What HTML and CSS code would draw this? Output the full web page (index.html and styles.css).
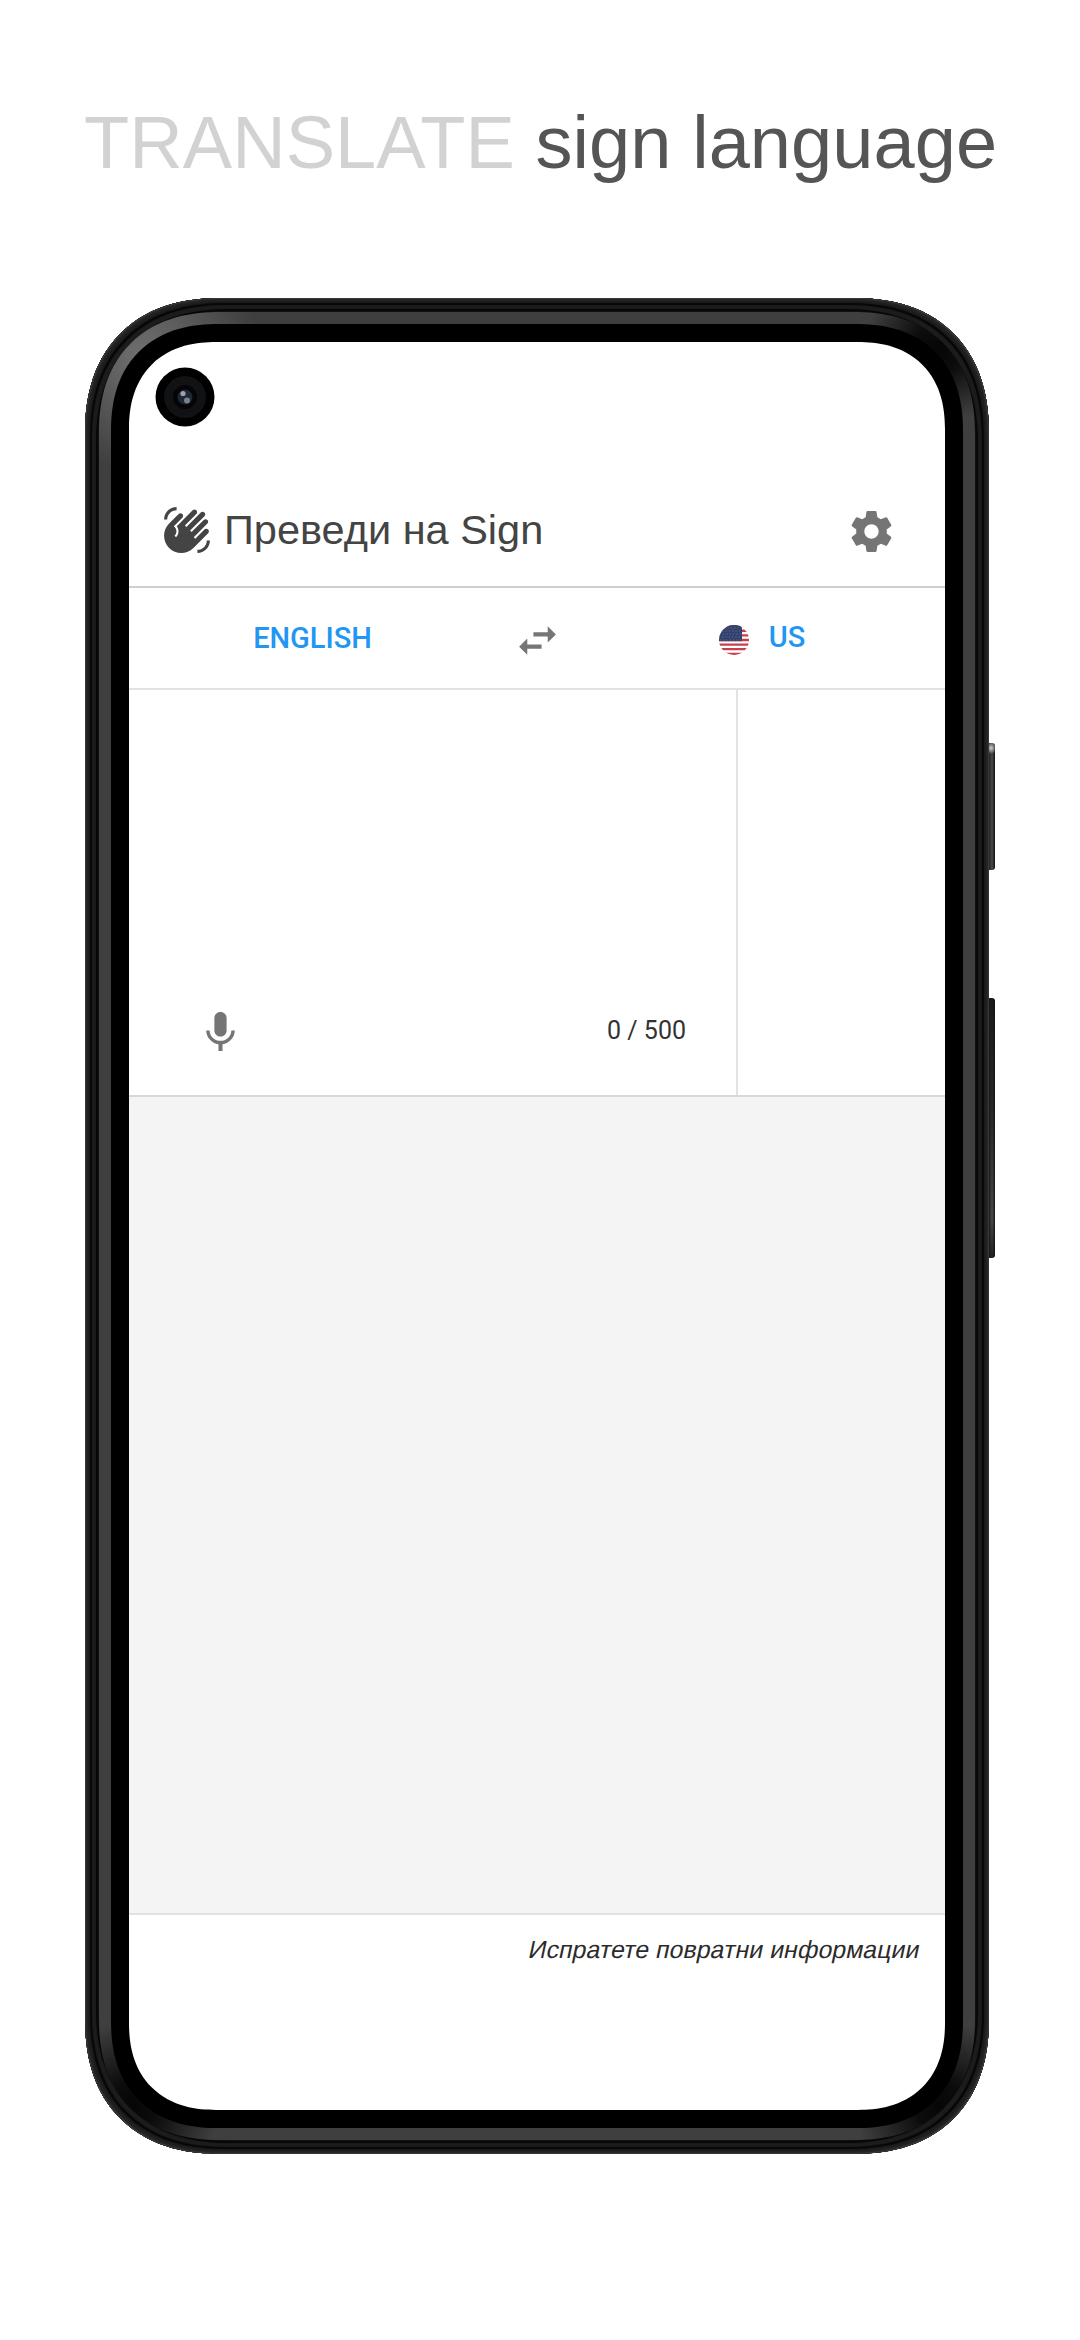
FILE: index.html
```html
<!DOCTYPE html>
<html lang="en">
<head>
<meta charset="utf-8">
<title>Преведи на Sign</title>
<link rel="stylesheet" href="styles.css">
</head>
<body>
<h1 class="headline"><span class="headline-light">TRANSLATE</span> sign language</h1>
<div class="phone">
  <span class="button power"></span>
  <span class="button volume"></span>
  <div class="rim">
    <div class="bezel">
      <div class="screen">
        <svg class="camera" viewBox="0 0 60 60">
          <circle cx="30" cy="30" r="29.5" fill="#000"/>
          <circle cx="30" cy="30" r="21" fill="#111214"/>
          <circle cx="30" cy="30" r="12" fill="#050507"/>
          <circle cx="30" cy="30" r="7.5" fill="#202733"/>
          <circle cx="28" cy="26.500" r="2.600" fill="#9da1ab"/>
          <circle cx="32" cy="33.500" r="3" fill="#71838e"/>
        </svg>
        <header class="app-bar">
          <svg class="hand" viewBox="0 0 24 24"><path d="M23 17c0 3.310-2.690 6-6 6v-1.500c2.480 0 4.500-2.020 4.500-4.500H23zM1 7c0-3.310 2.690-6 6-6v1.500C4.520 2.500 2.500 4.520 2.500 7H1zM8.010 4.320l-4.600 4.600c-3.220 3.220-3.220 8.450 0 11.670s8.450 3.220 11.670 0l7.070-7.070c.49-.49.49-1.280 0-1.770s-1.280-.49-1.770 0l-4.420 4.420-.71-.71 6.540-6.540c.49-.49.49-1.280 0-1.770s-1.280-.49-1.770 0l-5.830 5.830-.71-.71 6.890-6.890c.49-.49.49-1.280 0-1.770s-1.280-.49-1.770 0l-6.890 6.890-.71-.7 5.480-5.480c.49-.49.49-1.280 0-1.770s-1.280-.49-1.770 0l-7.620 7.620c1.220 1.570 1.110 3.840-.33 5.280l-.71-.71c1.170-1.170 1.170-3.070 0-4.240l-.35-.35 4.070-4.070c.49-.49.49-1.280 0-1.770-.49-.48-1.280-.48-1.760 0z"/></svg>
          <span class="app-title">Преведи на Sign</span>
          <svg class="gear" viewBox="0 0 24 24"><path d="M19.430 12.980c.04-.32.07-.64.07-.98s-.03-.66-.07-.98l2.110-1.650c.19-.15.24-.42.12-.64l-2-3.460c-.12-.22-.39-.3-.61-.22l-2.490 1c-.52-.4-1.080-.73-1.690-.98l-.38-2.650C14.460 2.180 14.250 2 14 2h-4c-.25 0-.46.18-.49.42l-.38 2.650c-.61.25-1.170.59-1.690.98l-2.490-1c-.23-.09-.49 0-.61.22l-2 3.460c-.13.22-.07.49.12.64l2.110 1.650c-.04.32-.07.65-.07.98s.03.66.07.98l-2.110 1.650c-.19.15-.24.42-.12.64l2 3.460c.12.22.39.3.61.22l2.490-1c.52.4 1.080.73 1.690.98l.38 2.650c.03.24.24.42.49.42h4c.25 0 .46-.18.49-.42l.38-2.650c.61-.25 1.170-.59 1.690-.98l2.490 1c.23.09.49 0 .61-.22l2-3.460c.12-.22.07-.49-.12-.64l-2.110-1.650zM12 15.500c-1.930 0-3.500-1.570-3.500-3.500s1.570-3.500 3.500-3.500 3.500 1.570 3.500 3.500-1.570 3.500-3.500 3.500z"/></svg>
        </header>
        <nav class="languages">
          <span class="source">ENGLISH</span>
          <svg class="swap" viewBox="0 0 24 24"><path d="M6.990 11L3 15l3.990 4v-3H14v-2H6.990v-3zM21 9l-3.990-4v3H10v2h7.010v3L21 9z"/></svg>
          <span class="target">
            <svg class="flag" viewBox="0 0 30 30">
              <defs><clipPath id="disc"><circle cx="15" cy="15" r="15"/></clipPath></defs>
              <g clip-path="url(#disc)">
                <rect width="30" height="30" fill="#fff"/>
                <path d="M0 1.150h30M0 5.770h30M0 10.380h30M0 15h30M0 19.600h30M0 24.200h30M0 28.900h30" stroke="#c6414b" stroke-width="2.300"/>
                <rect width="23" height="16.200" fill="#33416d"/>
                <path d="M2 3h21M0 6h23M1 9h22M0 12h23M1 15h22" stroke="#6d77a0" stroke-width="1" stroke-dasharray="1 2.300"/>
              </g>
            </svg>
            <span class="country">US</span>
          </span>
        </nav>
        <main class="panels">
          <section class="input-panel">
            <svg class="mic" viewBox="0 0 24 24"><path d="M12 14c1.660 0 2.990-1.340 2.990-3L15 5c0-1.660-1.340-3-3-3S9 3.340 9 5v6c0 1.660 1.340 3 3 3zm5.300-3c0 3-2.540 5.100-5.300 5.100S6.700 14 6.700 11H5c0 3.410 2.720 6.230 6 6.720V21h2v-3.280c3.280-.48 6-3.300 6-6.720h-1.700z"/></svg>
            <span class="counter">0 / 500</span>
          </section>
          <section class="output-panel"></section>
        </main>
        <div class="backdrop"></div>
        <footer class="feedback"><span class="feedback-link">Испратете повратни информации</span></footer>
      </div>
    </div>
  </div>
</div>
</body>
</html>
```
FILE: styles.css
```css
* { box-sizing: border-box; }
body {
  margin: 0;
  width: 1080px;
  height: 2340px;
  background: #fff;
  font-family: "Liberation Sans", Arial, sans-serif;
  overflow: hidden;
}
svg { display: block; flex: none; }
.headline {
  margin: 0;
  height: 298px;
  padding: 100px 0 0 84px;
  font-size: 74px;
  line-height: 86px;
  letter-spacing: 0.06px;
  font-weight: 400;
  color: #555;
  white-space: nowrap;
}
.headline-light { color: #d2d2d2; }

/* Device body: outer shell, polished rim, black bezel */
.phone {
  position: relative;
  width: 904px;
  height: 1856px;
  margin-left: 85px;
  padding: 14px;
  border-radius: 121px;
  background: #171717;
  box-shadow:
    inset 0 0 1px 1px #3a3c3b,
    inset 0 0 0 3px #232323,
    inset 0 0 1px 5px #1d1d1d,
    inset 0 0 1px 7px #070707,
    inset 0 0 1px 11px #1c1c1c,
    inset 0 0 2px 13px #050505;
}
.rim {
  height: 100%;
  padding: 12px;
  border-radius: 107px;
  background:
    radial-gradient(circle at 45px 45px, #707070 0, rgba(112,112,112,0) 115px),
    radial-gradient(circle at 842px 34px, #060606 0, #0c0c0c 25px, rgba(12,12,12,0) 75px),
    radial-gradient(circle at 34px 1794px, #060606 0, #0c0c0c 25px, rgba(12,12,12,0) 85px),
    radial-gradient(circle at 842px 1794px, #060606 0, #0c0c0c 25px, rgba(12,12,12,0) 85px),
    #3f3f3f;
}
.bezel {
  height: 100%;
  padding: 18px;
  border-radius: 94px;
  background: #000;
}
.button {
  position: absolute;
  left: 904px;
  width: 6px;
  border-radius: 0 3px 3px 0;
}
.power {
  top: 445px;
  height: 127px;
  background: radial-gradient(circle at 2px 5px, #ccc 0, rgba(80,80,80,0) 6px), linear-gradient(90deg, #222, #4a4a4a 50%, #111);
}
.volume {
  top: 700px;
  height: 260px;
  background: linear-gradient(90deg, #181818, rgba(24,24,24,0) 50%, #141414), linear-gradient(#1a1a1a, #2d2d2d 45%, #505050 85%, #222);
}

.screen {
  position: relative;
  display: flex;
  flex-direction: column;
  height: 100%;
  border-radius: 76px;
  background: #fff;
  overflow: hidden;
}

/* Continuous-curvature corners, wider than plain arcs */
@supports (corner-shape: superellipse(1.2)) {
  .phone, .rim, .bezel, .screen { corner-shape: superellipse(1.2); }
  .phone { border-radius: 136px; }
  .rim { border-radius: 121px; }
  .bezel { border-radius: 107px; }
  .screen { border-radius: 87px; }
}
.camera {
  position: absolute;
  left: 26px;
  top: 25px;
  width: 60px;
  height: 60px;
}
.app-bar {
  display: flex;
  align-items: center;
  height: 246px;
  padding: 132px 49px 0 33px;
  border-bottom: 2px solid #cfcfcf;
}
.hand { width: 50px; height: 50px; fill: #444; }
.app-title {
  flex: 1;
  margin-left: 12px;
  font-size: 41.5px;
  line-height: 48px;
  color: #444;
  white-space: nowrap;
}
.gear { width: 49px; height: 49px; margin-top: 3px; fill: #757575; }
.languages {
  display: grid;
  grid-template-columns: 367px 83px 366px;
  align-items: center;
  justify-items: center;
  height: 102px;
  border-bottom: 2px solid #e2e2e2;
  font: 500 29px/34px Roboto, sans-serif;
  color: #2196f3;
}
.swap { width: 49px; height: 49px; margin-top: 4px; fill: #757575; }
.target { display: flex; align-items: center; gap: 20px; }
.flag { width: 30px; height: 30px; margin-top: 4px; }
.country { margin-top: -3px; }
.panels { display: flex; height: 407px; border-bottom: 2px solid #d8d8d8; }
.input-panel {
  display: flex;
  align-items: flex-end;
  justify-content: space-between;
  width: 609px;
  padding: 0 50px 38px 67px;
  border-right: 2px solid #e2e2e2;
}
.mic { width: 49px; height: 49px; fill: #757575; }
.counter {
  padding-bottom: 11px;
  font: 400 25px/30px Roboto, sans-serif;
  color: #333;
}
.output-panel { flex: 1; }
.backdrop { height: 816px; background: #f4f4f4; }
.feedback {
  display: flex;
  flex: 1;
  justify-content: flex-end;
  align-items: flex-start;
  padding: 21px 25px 0 0;
  border-top: 2px solid #e2e2e2;
  font-size: 24.8px;
  line-height: 28px;
  letter-spacing: 0.1px;
  color: #2b2b2b;
}
/* Slanted upright letterforms rather than the cursive italic ones */
.feedback-link {
  transform: skewX(-12deg);
  white-space: nowrap;
}
```
